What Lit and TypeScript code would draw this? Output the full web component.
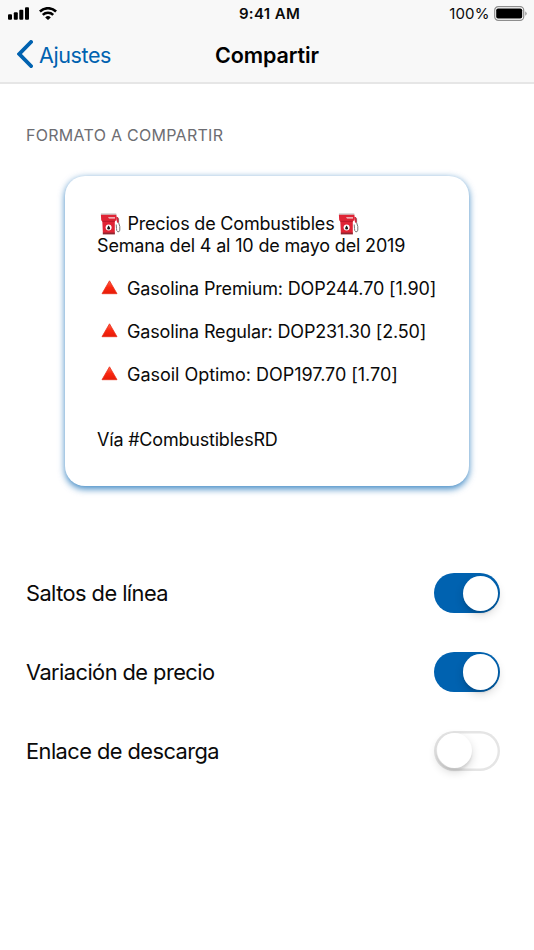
import { LitElement, html, svg, css } from "lit";
import { customElement, property, state } from "lit/decorators.js";

const pump = html`<svg class="pump" viewBox="0 0 21 22" width="21" height="22">
  <path d="M16.5 4.2 18.6 5.6V9.6L19.8 13.5V17.2Q19.3 19.3 17.8 18.8 16.4 18.2 16.5 15.5L16.2 11.5" fill="none" stroke="#777" stroke-width="1"/>
  <path d="M16.3 3.4 18.2 4.6 18.7 9.6 17.2 9.8 16.2 6Z" fill="#d7263a"/>
  <path d="M1 .3H16.2L16.5 2.4H.9Z" fill="#cfcfcf"/>
  <path d="M.9 1.8H16.5L16.1 7.2 14.8 8.4V20H2.9L2.3 8.4 1.2 7.2Z" fill="#df2435"/>
  <path d="M2.4 8.3H14.8" stroke="#ae1424" stroke-width=".8"/>
  <path d="M8 4.3H15V5.5H9Z" fill="#f5d9dc"/>
  <path d="M2.8 19.6H14.9V21.4H2.8Z" fill="#8f2630"/>
  <circle cx="8.6" cy="14.6" r="3" fill="#fff"/>
  <path d="M8.6 12.5Q11.6 16.3 8.6 16.5 5.6 16.3 8.6 12.5Z" fill="#181818"/>
</svg>`;

const triangle = html`<svg class="tri" viewBox="0 0 17 15" width="17" height="15">
  <defs><linearGradient id="g" x1="0" y1="0" x2="0" y2="1">
    <stop offset="0" stop-color="#ff6a50"/><stop offset=".5" stop-color="#fb2710"/><stop offset="1" stop-color="#e51b08"/>
  </linearGradient></defs>
  <path d="M8.5 .8 16 13.7H1Z" fill="url(#g)" stroke="#e9301c" stroke-width=".8" stroke-linejoin="round"/>
</svg>`;

@customElement("toggle-switch")
export class ToggleSwitch extends LitElement {
  @property({ type: Boolean, reflect: true }) on = false;

  static styles = css`
    :host { display: block; }
    .track {
      box-sizing: border-box; width: 66px; height: 40px; padding: 2.3px;
      border-radius: 20px; display: flex; background: #fff;
      box-shadow: inset 0 0 0 2.4px #e5e5e5;
    }
    .knob {
      width: 35.4px; height: 35.4px; border-radius: 50%; background: #fff;
      box-shadow: 0 4px 10px rgba(0, 0, 0, 0.16), 0 3px 2px rgba(0, 0, 0, 0.07);
    }
    :host([on]) .track { background: #0062b0; box-shadow: none; justify-content: flex-end; }
  `;

  render() {
    return html`<div class="track"><div class="knob"></div></div>`;
  }
}

@customElement("app-root")
export class AppRoot extends LitElement {
  @state() private prices = [
    { text: "Gasolina Premium: DOP244.70 [1.90]", cls: "p1" },
    { text: "Gasolina Regular: DOP231.30 [2.50]", cls: "p2" },
    { text: "Gasoil Optimo: DOP197.70 [1.70]", cls: "p3" },
  ];

  @state() private options = [
    { label: "Saltos de línea", on: true },
    { label: "Variación de precio", on: true },
    { label: "Enlace de descarga", on: false },
  ];

  static styles = css`
    :host {
      display: block; height: 950px; overflow: hidden; background: #fff; color: #0a0a0a;
      font-family: Inter, "Liberation Sans", sans-serif; white-space: nowrap;
    }
    svg { display: block; flex: none; }
    .top { box-sizing: border-box; height: 84px; background: #f8f8f8; border-bottom: 2px solid #e6e6e6; }
    .status, .nav { display: grid; grid-template-columns: 1fr auto 1fr; align-items: center; }
    .status { height: 27px; padding: 0 7px 0 8px; font-size: 15px; }
    .signals { display: flex; gap: 9px; align-items: center; }
    .time { font-weight: 600; letter-spacing: 0.35px; padding-left: 4px; }
    .power { display: flex; justify-content: flex-end; align-items: center; gap: 4.5px; letter-spacing: 0.1px; }
    .nav { height: 55px; padding: 0 17px; font-size: 21.5px; }
    .back { display: flex; align-items: center; gap: 6px; color: #0062b0; letter-spacing: -0.4px; }
    .chevron { margin: -1px 0 1px; }
    .title { font-weight: 600; color: #000; letter-spacing: -0.1px; }
    .caption { padding: 41px 26px 0; font-size: 16px; line-height: 20px; color: #6d6d72; letter-spacing: 0.28px; }
    .card {
      box-sizing: border-box; width: 404px; height: 310px; margin: 31px 0 0 65px; padding: 37px 32px 35px;
      border-radius: 20px; background: #fff; font-size: 18px; line-height: 21.6px;
      box-shadow: 0 2.5px 7.5px rgba(0, 98, 176, 0.75);
    }
    .line { display: flex; align-items: center; height: 21.6px; letter-spacing: -0.2px; }
    .l2 { letter-spacing: -0.17px; }
    .p1, .p2 { letter-spacing: -0.16px; }
    .p3 { letter-spacing: -0.03px; }
    .pump { margin: 0 6.5px 0 3px; }
    .pump + span + .pump { margin-left: 3.5px; }
    .tri { margin: -2px 9px 0 4px; }
    .price { margin-top: 21.6px; }
    .via { margin-top: 43.2px; }
    .options { padding: 68px 33.6px 0 26px; }
    .option { display: flex; align-items: center; justify-content: space-between; height: 78.7px; font-size: 21.8px; letter-spacing: -0.55px; }
  `;

  render() {
    return html`
      <header class="top">
        <div class="status">
          <div class="signals">
            <svg width="22" height="14" viewBox="0 0 22 14">
              ${[[0, 7.3, 5.5], [5.8, 5.3, 7.5], [11.3, 2.8, 10], [17, 0.3, 12.5]].map(
                ([x, y, h]) => svg`<rect x=${x} y=${y} width="4" height=${h} rx="1"/>`
              )}
            </svg>
            <svg width="18" height="14" viewBox="0 0 18 14">
              <g fill="none" stroke="#000" stroke-width="2.5">
                <path d="M.9 4.5A11.5 11.5 0 0 1 17.1 4.5"/><path d="M3.8 7.8A7.4 7.4 0 0 1 14.2 7.8"/>
              </g>
              <path d="M9 13.1 6.2 10.4A4 4 0 0 1 11.8 10.4Z"/>
            </svg>
          </div>
          <div class="time">9:41 AM</div>
          <div class="power">
            <span>100%</span>
            <svg width="33" height="15" viewBox="0 0 33 15">
              <rect x=".7" y=".7" width="29" height="13.6" rx="3.6" fill="#fff" stroke="#8e8e8e" stroke-width="1.2"/>
              <rect x="2.2" y="2.4" width="26" height="10.2" rx="1.8"/>
              <path d="M31.3 5.2Q34 7.5 31.3 9.8Z" fill="#8e8e8e"/>
            </svg>
          </div>
        </div>
        <div class="nav">
          <div class="back">
            <svg class="chevron" width="16" height="28" viewBox="0 0 16 28"><path d="M14 2 2.3 14 14 26" fill="none" stroke="#0062b0" stroke-width="3.9" stroke-linecap="round"/></svg>
            <span>Ajustes</span>
          </div>
          <div class="title">Compartir</div>
        </div>
      </header>
      <div class="caption">FORMATO A COMPARTIR</div>
      <section class="card">
        <div class="line">${pump}<span class="l1">Precios de Combustibles</span>${pump}</div>
        <div class="line"><span class="l2">Semana del 4 al 10 de mayo del 2019</span></div>
        ${this.prices.map((p) => html`<div class="line price">${triangle}<span class=${p.cls}>${p.text}</span></div>`)}
        <div class="line via"><span>Vía #CombustiblesRD</span></div>
      </section>
      <section class="options">
        ${this.options.map((o) => html`<div class="option"><span>${o.label}</span><toggle-switch ?on=${o.on}></toggle-switch></div>`)}
      </section>
    `;
  }
}
